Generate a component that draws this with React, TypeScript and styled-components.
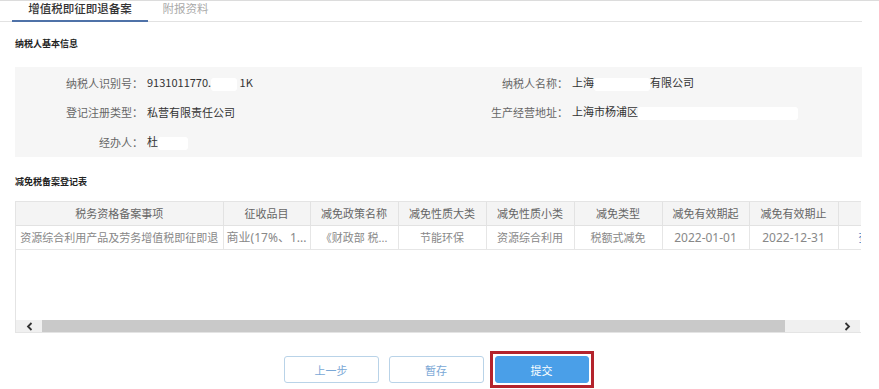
import React from "react";
import styled, { createGlobalStyle } from "styled-components";

const Global = createGlobalStyle`
  html, body { margin: 0; padding: 0; background: #fff; }
  body { font-family: "Noto Sans CJK SC", "Noto Sans", sans-serif; color: #333; }
  * { box-sizing: border-box; }
`;

const Page = styled.div`
  width: 879px;
  height: 389px;
  border-top: 1px solid #dcdcdc;
  overflow: hidden;
  padding: 0 17px 0 0;
`;

const TabBar = styled.div`
  display: flex;
  height: 21px;
  border-bottom: 1px solid #e2e2e2;
  padding-left: 12px;
`;

const Tab = styled.div<{ $active?: boolean }>`
  width: ${(p) => (p.$active ? "136px" : "75px")};
  height: 21px;
  font-size: 11.5px;
  line-height: 15px;
  text-align: center;
  color: ${(p) => (p.$active ? "#333" : "#aaa")};
  font-weight: ${(p) => (p.$active ? 500 : 400)};
  border-bottom: ${(p) => (p.$active ? "2px solid #4f72a8" : "none")};
`;

const SectionTitle = styled.div<{ $top: number }>`
  margin: ${(p) => p.$top}px 0 0 15px;
  font-size: 9px;
  line-height: 12px;
  font-weight: 700;
  color: #222;
`;

const InfoBox = styled.div`
  margin: 17px 0 0 15px;
  width: 847px;
  height: 90px;
  background: #f6f6f6;
  display: grid;
  grid-template-columns: 128px 297px 128px 1fr;
  grid-auto-rows: 29.5px;
  padding-top: 1px;
  align-items: center;
`;

const Label = styled.div`
  text-align: right;
  font-size: 11px;
  line-height: 14px;
  color: #666;
`;

const Value = styled.div`
  padding-left: 4px;
  font-size: 11px;
  line-height: 14px;
  color: #333;
  white-space: nowrap;
`;

const Mask = styled.span<{ $w: number }>`
  display: inline-block;
  width: ${(p) => p.$w}px;
  height: 13px;
  background: #fff;
  vertical-align: middle;
  border-radius: 3px;
`;

const TableWrap = styled.div`
  margin: 13px 0 0 15px;
  width: 846px;
  height: 132px;
  border: 1px solid #e4e4e4;
  border-right: none;
  display: flex;
  flex-direction: column;
  overflow: hidden;
`;

const TableScroll = styled.div`
  flex: 1;
  overflow: hidden;
`;

const Table = styled.table`
  border-collapse: collapse;
  table-layout: fixed;
  width: 900px;
`;

const Th = styled.th`
  height: 23px;
  background: #f4f4f4;
  border-right: 1px solid #e2e2e2;
  border-bottom: 1px solid #e2e2e2;
  font-size: 11px;
  font-weight: 400;
  color: #666;
  padding: 0;
  text-align: center;
`;

const Td = styled.td<{ $link?: boolean; $num?: boolean }>`
  height: 24px;
  border-right: 1px solid #e6e6e6;
  border-bottom: 1px solid #e6e6e6;
  font-family: "Noto Sans", "Noto Sans CJK SC", sans-serif;
  font-size: ${(p) => (p.$num ? "12px" : "11px")};
  color: ${(p) => (p.$link ? "#3b7dc4" : "#888")};
  text-align: ${(p) => (p.$link ? "left" : "center")};
  padding: ${(p) => (p.$link ? "0 0 0 20px" : "0 2px")};
  white-space: nowrap;
  overflow: hidden;
`;

const ScrollBar = styled.div`
  height: 12px;
  display: flex;
  align-items: stretch;
  background: #f0f0f0;
  margin-right: 1px;
`;

const Arrow = styled.div`
  width: 26px;
  display: flex;
  align-items: center;
  justify-content: center;
`;

const Thumb = styled.div`
  width: 743px;
  background: #c9c9c9;
`;

const Spacer = styled.div`
  flex: 1;
`;

const Buttons = styled.div`
  display: flex;
  justify-content: center;
  align-items: center;
  gap: 10px;
  margin: 18px 0 0 15px;
`;

const Button = styled.button<{ $primary?: boolean }>`
  width: ${(p) => (p.$primary ? "94px" : "95px")};
  height: 27px;
  border-radius: 3px;
  font-family: inherit;
  font-size: 11px;
  border: 1px solid ${(p) => (p.$primary ? "#4a9fe8" : "#b9d3e8")};
  background: ${(p) => (p.$primary ? "#4a9fe8" : "#fff")};
  color: ${(p) => (p.$primary ? "#fff" : "#7aa8d6")};
  padding: 0;
`;

const Highlight = styled.div`
  display: flex;
  border: 3px solid #b4232c;
  padding: 2px;
  margin-left: -4px;
`;

const cols = [207, 87, 88, 88, 88, 88, 87, 89, 78];

const Chevron = ({ dir }: { dir: "l" | "r" }) => (
  <svg width="7" height="9" viewBox="0 0 7 9">
    <path
      d={dir === "l" ? "M5.5 1 L2 4.5 L5.5 8" : "M1.5 1 L5 4.5 L1.5 8"}
      fill="none"
      stroke="#333"
      strokeWidth="1.8"
    />
  </svg>
);

export default function App() {
  return (
    <>
      <Global />
      <Page>
        <TabBar>
          <Tab $active>增值税即征即退备案</Tab>
          <Tab>附报资料</Tab>
        </TabBar>

        <SectionTitle $top={16}>纳税人基本信息</SectionTitle>

        <InfoBox>
          <Label>纳税人识别号：</Label>
          <Value>
            9131011770.<Mask $w={26} />&nbsp;1K
          </Value>
          <Label>纳税人名称：</Label>
          <Value>
            上海<Mask $w={56} />有限公司
          </Value>

          <Label>登记注册类型：</Label>
          <Value>私营有限责任公司</Value>
          <Label>生产经营地址：</Label>
          <Value>
            上海市杨浦区<Mask $w={160} />
          </Value>

          <Label>经办人：</Label>
          <Value>
            杜<Mask $w={30} />
          </Value>
          <div />
          <div />
        </InfoBox>

        <SectionTitle $top={19}>减免税备案登记表</SectionTitle>

        <TableWrap>
          <TableScroll>
            <Table>
              <colgroup>
                {cols.map((w, i) => (
                  <col key={i} style={{ width: w }} />
                ))}
              </colgroup>
              <thead>
                <tr>
                  <Th>税务资格备案事项</Th>
                  <Th>征收品目</Th>
                  <Th>减免政策名称</Th>
                  <Th>减免性质大类</Th>
                  <Th>减免性质小类</Th>
                  <Th>减免类型</Th>
                  <Th>减免有效期起</Th>
                  <Th>减免有效期止</Th>
                  <Th></Th>
                </tr>
              </thead>
              <tbody>
                <tr>
                  <Td>资源综合利用产品及劳务增值税即征即退</Td>
                  <Td $num>商业(17%、1...</Td>
                  <Td>《财政部 税...</Td>
                  <Td>节能环保</Td>
                  <Td>资源综合利用</Td>
                  <Td>税额式减免</Td>
                  <Td $num>2022-01-01</Td>
                  <Td $num>2022-12-31</Td>
                  <Td $link>查</Td>
                </tr>
              </tbody>
            </Table>
          </TableScroll>
          <ScrollBar>
            <Arrow>
              <Chevron dir="l" />
            </Arrow>
            <Thumb />
            <Spacer />
            <Arrow>
              <Chevron dir="r" />
            </Arrow>
          </ScrollBar>
        </TableWrap>

        <Buttons>
          <Button>上一步</Button>
          <Button>暂存</Button>
          <Highlight>
            <Button $primary>提交</Button>
          </Highlight>
        </Buttons>
      </Page>
    </>
  );
}
